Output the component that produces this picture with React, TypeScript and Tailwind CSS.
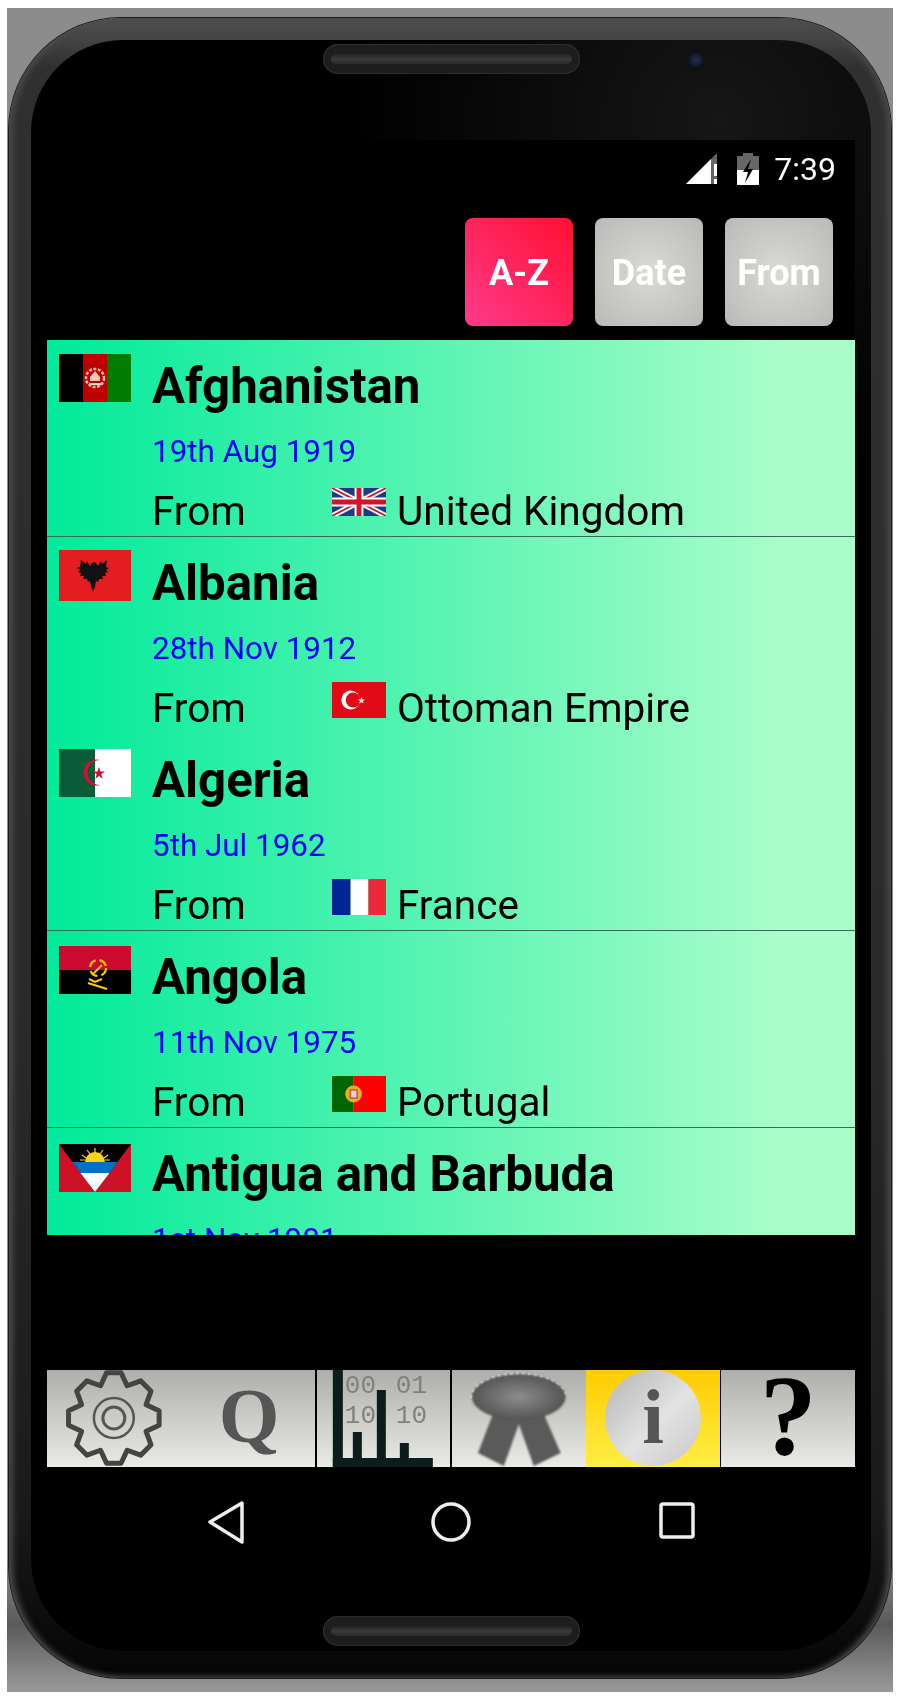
import React from "react";

const roboto = "font-['Roboto',sans-serif]";

const gearPath = () => {
  const cx = 67;
  const cy = 48;
  const pts: string[] = [];
  for (let i = 0; i < 8; i++) {
    const a = (i * Math.PI) / 4 - Math.PI / 2;
    const steps: [number, number][] = [
      [35, -0.39],
      [46, -0.16],
      [46, 0.16],
      [35, 0.39],
    ];
    steps.forEach(([r, d]) => {
      pts.push(`${(cx + r * Math.cos(a + d)).toFixed(1)} ${(cy + r * Math.sin(a + d)).toFixed(1)}`);
    });
  }
  return "M" + pts.join("L") + "Z";
};

const FlagAfghanistan = () => (
  <svg viewBox="0 0 72 48" className="h-full w-full" preserveAspectRatio="none">
    <rect width="24" height="48" fill="#000" />
    <rect x="24" width="24" height="48" fill="#be0000" />
    <rect x="48" width="24" height="48" fill="#007a00" />
    <circle cx="36" cy="24" r="9" fill="none" stroke="#f0b8a8" strokeWidth="2.500" strokeDasharray="3 1.500" />
    <path d="M36 17l5 6v4h-10v-4z" fill="#f0c8b8" />
    <rect x="30" y="29" width="12" height="2" fill="#f5d8c8" />
  </svg>
);

const FlagAlbania = () => (
  <svg viewBox="0 0 72 51" className="h-full w-full" preserveAspectRatio="none">
    <rect width="72" height="51" fill="#e41e20" />
    <path d="M22 10l5 4 1-3 3 5 2-3 2-1 2 1 2 3 3-5 1 3 5-4-1 7 3 1-3 2 2 2-3 1 1 3-4 0 1 3-4 0-1 3-2-1-1 6-2 4-2-4-1-6-2 1-1-3-4 0 1-3-4 0 1-3-3-1 2-2-3-2 3-1z" fill="#111" />
  </svg>
);

const FlagAlgeria = () => (
  <svg viewBox="0 0 72 48" className="h-full w-full" preserveAspectRatio="none">
    <rect width="36" height="48" fill="#0a5c38" />
    <rect x="36" width="36" height="48" fill="#fff" />
    <path d="M41 11a13 13 0 1 0 0 25a10.500 10.500 0 1 1 0-25z" fill="#d21034" />
    <path d="M40 18l1.500 4.500h4.500l-3.700 2.800 1.400 4.500-3.700-2.800-3.700 2.800 1.400-4.500-3.700-2.800h4.500z" fill="#d21034" />
  </svg>
);

const FlagAngola = () => (
  <svg viewBox="0 0 72 48" className="h-full w-full" preserveAspectRatio="none">
    <rect width="72" height="24" fill="#cc092f" />
    <rect y="24" width="72" height="24" fill="#000" />
    <circle cx="39" cy="22" r="8" fill="none" stroke="#ffcb00" strokeWidth="2.200" strokeDasharray="9 4" />
    <path d="M29 37l19 6M30 33l6 3 7-3" fill="none" stroke="#ffcb00" strokeWidth="2" />
    <path d="M34 28l9-9" stroke="#ffcb00" strokeWidth="2" />
  </svg>
);

const FlagAntigua = () => (
  <svg viewBox="0 0 72 48" className="h-full w-full" preserveAspectRatio="none">
    <rect width="72" height="48" fill="#ce1126" />
    <path d="M0 0h72L36 48z" fill="#000" />
    <path d="M13.500 18h45l-8 11H21.500z" fill="#0072c6" />
    <path d="M21.500 29h29L36 48z" fill="#fff" />
    <path d="M26 18a10 10 0 0 1 20 0z" fill="#fcd116" />
    <path d="M36 4v5M28 6l3 4M44 6l-3 4M23 11l4 3M49 11l-4 3M21 16h5M51 16h-5" stroke="#fcd116" strokeWidth="1.200" />
  </svg>
);

const FlagUK = () => (
  <svg viewBox="0 0 55 28" className="h-full w-full" preserveAspectRatio="none">
    <rect width="55" height="28" fill="#1f3a80" />
    <path d="M0 0L55 28M55 0L0 28" stroke="#fff" strokeWidth="5.500" />
    <path d="M0 0L55 28M55 0L0 28" stroke="#cf142b" strokeWidth="1.800" />
    <path d="M27.500 0v28M0 14h55" stroke="#fff" strokeWidth="9" />
    <path d="M27.500 0v28M0 14h55" stroke="#cf142b" strokeWidth="5" />
  </svg>
);

const FlagTurkey = () => (
  <svg viewBox="0 0 55 36" className="h-full w-full" preserveAspectRatio="none">
    <rect width="55" height="36" fill="#e30a17" />
    <circle cx="19" cy="18" r="9.500" fill="#fff" />
    <circle cx="21.500" cy="18" r="7.500" fill="#e30a17" />
    <path d="M30 15l.9 2.400h2.600l-2.100 1.600.8 2.500-2.200-1.500-2.200 1.500.8-2.500-2.100-1.600h2.600z" fill="#fff" />
  </svg>
);

const FlagFrance = () => (
  <svg viewBox="0 0 55 36" className="h-full w-full" preserveAspectRatio="none">
    <rect width="19" height="36" fill="#002395" />
    <rect x="19" width="18" height="36" fill="#fff" />
    <rect x="37" width="18" height="36" fill="#ed2939" />
  </svg>
);

const FlagPortugal = () => (
  <svg viewBox="0 0 55 36" className="h-full w-full" preserveAspectRatio="none">
    <rect width="22" height="36" fill="#006600" />
    <rect x="22" width="33" height="36" fill="#ff0000" />
    <circle cx="22" cy="18" r="8.500" fill="#e8b020" />
    <rect x="18.500" y="14" width="7" height="8" fill="#cfd6ea" stroke="#d02020" strokeWidth="1" />
  </svg>
);

const countries = [
  { name: "Afghanistan", date: "19th Aug 1919", from: "United Kingdom", flag: <FlagAfghanistan />, flagTop: 14, flagH: 48, small: <FlagUK />, smallTop: 14, smallH: 28, line: true },
  { name: "Albania", date: "28th Nov 1912", from: "Ottoman Empire", flag: <FlagAlbania />, flagTop: 13, flagH: 51, small: <FlagTurkey />, smallTop: 11, smallH: 36, line: false },
  { name: "Algeria", date: "5th Jul 1962", from: "France", flag: <FlagAlgeria />, flagTop: 15, flagH: 48, small: <FlagFrance />, smallTop: 11, smallH: 36, line: true },
  { name: "Angola", date: "11th Nov 1975", from: "Portugal", flag: <FlagAngola />, flagTop: 15, flagH: 48, small: <FlagPortugal />, smallTop: 11, smallH: 36, line: true },
  { name: "Antigua and Barbuda", date: "1st Nov 1981", from: "United Kingdom", flag: <FlagAntigua />, flagTop: 16, flagH: 48, small: <FlagUK />, smallTop: 14, smallH: 28, line: false },
];

const CountryRow = ({ c }: { c: (typeof countries)[number] }) => (
  <div className={`flex h-[197px] shrink-0 ${c.line ? "border-b border-[#2f6f55]" : ""}`}>
    <div className="ml-[12px] w-[72px] shrink-0" style={{ paddingTop: c.flagTop }}>
      <div className="w-[72px]" style={{ height: c.flagH }}>
        {c.flag}
      </div>
    </div>
    <div className="ml-[21px] flex-1 text-black">
      <p className="mt-[19px] h-[54px] text-[49.200px] leading-[54px] font-bold">{c.name}</p>
      <p className="mt-[20px] h-[38px] text-[31.400px] leading-[38px] text-[#0000ff]">{c.date}</p>
      <div className="mt-[16px] flex h-[48px] items-start">
        <span className="w-[180px] text-[40.500px] leading-[48px]">From</span>
        <div className="w-[54px]" style={{ marginTop: c.smallTop - 13, height: c.smallH }}>
          {c.small}
        </div>
        <span className="ml-[11px] text-[40.500px] leading-[48px]">{c.from}</span>
      </div>
    </div>
  </div>
);

const SortButton = ({ label, active }: { label: string; active?: boolean }) => (
  <div
    className={`flex h-[108px] w-[108px] items-center justify-center rounded-[8px] pt-[2px] text-[36px] font-bold text-white ${
      active
        ? "bg-[linear-gradient(to_top_right,#ff3a8c,#ff1030)]"
        : "bg-[radial-gradient(circle,#d9dbd6,#b9b9b7)]"
    }`}
  >
    {label}
  </div>
);

const tileBg = "bg-[linear-gradient(to_bottom,#aeaeaa,#eaeae6)]";

const GearTile = () => (
  <div className={`overflow-hidden ${tileBg}`}>
    <svg viewBox="0 0 135 97" className="h-full w-full">
      <path d={gearPath()} fill="none" stroke="#444" strokeWidth="5" strokeLinejoin="round" />
      <circle cx="67" cy="48" r="20" fill="none" stroke="#555" strokeWidth="2.500" />
      <circle cx="67" cy="48" r="11" fill="none" stroke="#555" strokeWidth="3" />
    </svg>
  </div>
);

const QTile = () => (
  <div className={`flex items-start justify-center overflow-hidden ${tileBg}`}>
    <span className="mt-[1px] font-['Liberation_Serif',serif] text-[78px] leading-[90px] font-bold text-[#555]">Q</span>
  </div>
);

const ChartTile = () => (
  <div className={`-ml-[1px] overflow-hidden border-l-2 border-black ${tileBg}`}>
    <svg viewBox="0 0 132 97" className="h-full w-full">
      <g fill="#808080" fontFamily="'Liberation Mono', monospace" fontSize="26">
        <text x="27" y="23">00</text>
        <text x="78" y="23">01</text>
        <text x="27" y="53">10</text>
        <text x="78" y="53">10</text>
      </g>
      <g fill="#0b1c1a">
        <rect x="15" y="0" width="10" height="97" />
        <rect x="35" y="62" width="9" height="35" />
        <rect x="59" y="20" width="9" height="77" />
        <rect x="82" y="73" width="9" height="24" />
        <rect x="15" y="88" width="100" height="9" />
      </g>
    </svg>
  </div>
);

const RibbonTile = () => (
  <div className={`-ml-[1px] overflow-hidden border-l-2 border-black ${tileBg}`}>
    <svg viewBox="0 0 134 97" className="h-full w-full">
      <defs>
        <radialGradient id="rosette">
          <stop offset="0%" stopColor="#8c8c8c" />
          <stop offset="100%" stopColor="#555" />
        </radialGradient>
        <filter id="soft">
          <feGaussianBlur stdDeviation="1.200" />
        </filter>
      </defs>
      <path d="M20 28a47 24 0 0 1 94 0" fill="none" stroke="#fff" strokeWidth="3" strokeDasharray="3 3" opacity="0.75" />
      <g filter="url(#soft)">
        <path d="M41 44L26 83l26 13 15-42 15 42 27-13-17-39z" fill="#5a5a5a" />
        <ellipse cx="67" cy="27" rx="47" ry="23" fill="url(#rosette)" />
      </g>
    </svg>
  </div>
);

const InfoTile = () => (
  <div className="relative flex items-start justify-center overflow-hidden bg-[linear-gradient(to_bottom,#ffcc00,#ffee44)]">
    <div className="flex h-[96px] w-[96px] items-start justify-center rounded-full bg-[linear-gradient(135deg,#b4b4b4,#e2e2e2_55%,#c8c8c8)]">
      <span className="font-['Liberation_Serif',serif] text-[78px] leading-[94px] font-bold text-[#555]">i</span>
    </div>
  </div>
);

const HelpTile = () => (
  <div className={`-ml-[1px] flex items-start justify-center overflow-hidden border-l-2 border-black ${tileBg}`}>
    <span className="font-['Liberation_Serif',serif] text-[114px] leading-[92px] font-bold text-black">?</span>
  </div>
);

const NavBar = () => (
  <div className="flex h-[110px] items-start">
    <svg width="808" height="110" viewBox="0 0 808 110" className="block">
      <path d="M195 36L163 55l32 20z" fill="none" stroke="#eee" strokeWidth="3.500" strokeLinejoin="round" />
      <circle cx="404" cy="55" r="18" fill="none" stroke="#eee" strokeWidth="3.500" />
      <rect x="614" y="37" width="32" height="33" rx="2" fill="none" stroke="#eee" strokeWidth="3.500" />
    </svg>
  </div>
);

const Speaker = () => (
  <div className="flex h-[30px] w-[257px] items-center rounded-[15px] bg-[#1d1d1d] px-[8px] shadow-[inset_0_0_2px_#555]">
    <div className="h-[10px] w-full rounded-[5px] bg-[linear-gradient(to_bottom,#222,#3a3a3a,#2a2a2a)]" />
  </div>
);

const App = () => (
  <div className={`h-[1700px] w-[900px] bg-white px-[7px] py-[8px] ${roboto}`}>
    <div className="h-[1684px] w-[886px] bg-[linear-gradient(to_bottom,#8c8c8c_92%,#5a5a5a_96%,#9a9a9a)] px-[2px] pt-[10px] pb-[14px]">
      <div className="h-full rounded-[112px] bg-[linear-gradient(to_bottom,#525252,#303030_3%,#2a2a2a_60%,#1a1a1a_90%,#050505)] pt-[22px] pr-[20px] pb-[27px] pl-[22px] shadow-[inset_4px_0_6px_#4a4a4a,inset_-4px_0_6px_#4a4a4a,0_0_0_1px_#1c1c1c]">
        <div className="relative flex h-full flex-col items-center overflow-hidden rounded-[92px] bg-[radial-gradient(circle_at_82%_5%,#161616,#000_22%)] pt-[4px]">
          <Speaker />
          <div className="absolute top-[10px] left-[657px] h-[20px] w-[16px] rounded-full bg-[radial-gradient(circle,#25304a,#000)]" />
          <div className="mt-[66px] flex w-[808px] flex-col bg-black blur-[0.4px]">
            <div className="flex h-[78px] items-start justify-end pt-[13px] pr-[19px]">
              <svg width="34" height="32" viewBox="0 0 34 32" className="mr-[16px]">
                <path d="M0 31L31 0v31z" fill="#666" />
                <path d="M0 31L25 6v25z" fill="#fff" />
                <rect x="28" y="11" width="3" height="12" fill="#fff" />
                <rect x="28" y="26" width="3" height="5" fill="#fff" />
              </svg>
              <svg width="24" height="32" viewBox="0 0 24 32" className="mr-[14px]">
                <path d="M7 0h10v3h6v29H1V3h6z" fill="#666" />
                <path d="M1 17h22v15H1z" fill="#fff" />
                <path d="M15 6L7 19h5l-3 11 8-14h-5z" fill="#000" />
              </svg>
              <span className="text-[32px] leading-[32px] text-white">7:39</span>
            </div>
            <div className="flex justify-end gap-[22px] pr-[22px]">
              <SortButton label="A-Z" active />
              <SortButton label="Date" />
              <SortButton label="From" />
            </div>
            <div className="mt-[14px] flex h-[895px] flex-col overflow-hidden bg-[linear-gradient(to_right,#00ea9a,#a8fdc9_90%)]">
              {countries.map((c) => (
                <CountryRow key={c.name} c={c} />
              ))}
            </div>
            <div className="mt-[135px] grid h-[97px] grid-cols-6">
              <GearTile />
              <QTile />
              <ChartTile />
              <RibbonTile />
              <InfoTile />
              <HelpTile />
            </div>
            <NavBar />
          </div>
          <div className="mt-[39px]">
            <Speaker />
          </div>
        </div>
      </div>
    </div>
  </div>
);

export default App;
